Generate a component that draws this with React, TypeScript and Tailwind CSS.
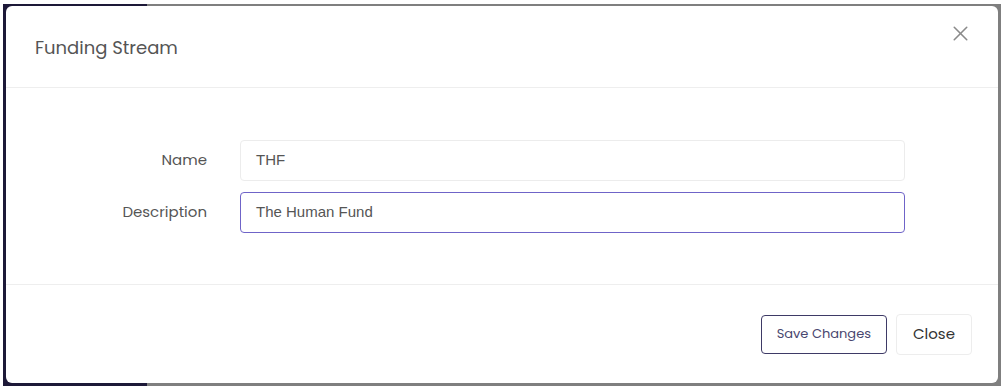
import React from 'react';
import { X } from 'lucide-react';

const poppins = "font-['Poppins','Inter','Noto_Sans',sans-serif]";

function Field({ label, value, focused }: { label: string; value: string; focused?: boolean }) {
    return (
        <div className="flex items-center">
            <label className={`w-[201px] text-right text-[15px] text-[#555] ${poppins}`}>{label}</label>
            <div
                className={`ml-[33px] flex h-[41px] w-[665px] items-center rounded-[4px] border bg-white pl-[15px] font-['Liberation_Sans',Arial,sans-serif] text-[15px] text-[#555] ${
                    focused ? 'border-[#6f64c8]' : 'border-[#ececec]'
                }`}
            >
                {value}
            </div>
        </div>
    );
}

export default function App() {
    return (
        <div className="relative h-[389px] w-[1007px] overflow-hidden bg-white">
            {/* Backdrop: dimmed sidebar + dimmed page */}
            <div className="ml-[3px] mt-[4px] flex h-[382px] w-[998px]">
                <div className="w-[144px] bg-[#1d1938]" />
                <div className="flex-1 bg-[#7f7f7f]" />
            </div>

            {/* Modal */}
            <div className="absolute left-[6px] top-[6px] flex h-[377px] w-[992px] flex-col rounded-[6px] bg-white">
                <div className="flex h-[82px] shrink-0 items-start justify-between border-b border-[#eeeeee]">
                    <h2 className={`ml-[29px] mt-[28px] text-[18px] text-[#555] ${poppins}`}>Funding Stream</h2>
                    <button className="mr-[25px] mt-[15px] text-[#8a8a8a]">
                        <X className="h-[25px] w-[25px]" strokeWidth={1.5} />
                    </button>
                </div>

                <div className="flex h-[197px] shrink-0 flex-col gap-[11px] border-b border-[#eeeeee] pt-[52px]">
                    <Field label="Name" value="THF" />
                    <Field label="Description" value="The Human Fund" focused />
                </div>

                <div className="flex flex-1 items-center justify-end gap-[9px] pr-[26px]">
                    <button className={`h-[39px] rounded-[4px] border border-[#3e3a66] px-[15px] text-[13px] text-[#4a4770] ${poppins}`}>
                        Save Changes
                    </button>
                    <button className={`h-[41px] rounded-[4px] border border-[#ededed] px-[16px] text-[15px] text-[#333] ${poppins}`}>
                        Close
                    </button>
                </div>
            </div>
        </div>
    );
}
